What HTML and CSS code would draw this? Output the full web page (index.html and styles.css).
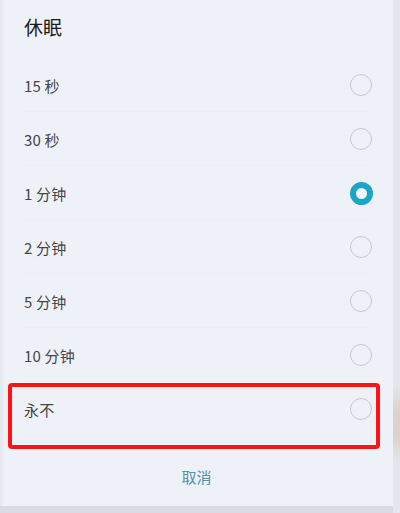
FILE: index.html
```html
<!DOCTYPE html>
<html lang="zh-CN">
<head>
<meta charset="utf-8">
<title>休眠</title>
<link rel="stylesheet" href="styles.css">
</head>
<body>
<div class="screen">
  <div class="dialog">
    <div class="title">休眠</div>
    <ul class="options">
      <li class="option"><span class="label">15 秒</span><span class="radio"></span></li>
      <li class="option"><span class="label">30 秒</span><span class="radio"></span></li>
      <li class="option"><span class="label">1 分钟</span><span class="radio checked"></span></li>
      <li class="option"><span class="label">2 分钟</span><span class="radio"></span></li>
      <li class="option"><span class="label">5 分钟</span><span class="radio"></span></li>
      <li class="option"><span class="label">10 分钟</span><span class="radio"></span></li>
      <li class="option last"><span class="label">永不</span><span class="radio"></span></li>
    </ul>
    <div class="actions"><span class="cancel">取消</span></div>
  </div>
  <div class="edge"></div>
  <div class="highlight"></div>
</div>
</body>
</html>
```

FILE: styles.css
```css
html, body {
  margin: 0;
  padding: 0;
}
body {
  width: 400px;
  height: 513px;
  overflow: hidden;
  background: #edf0f6;
  font-family: "Noto Sans CJK SC", "Noto Sans", Roboto, sans-serif;
}
.screen {
  position: relative;
  width: 400px;
  height: 513px;
  display: flex;
  background: linear-gradient(90deg, #e4e7ed 0, #eef1f7 4px, #eef1f7 100%);
}
.dialog {
  flex: 1;
  display: flex;
  flex-direction: column;
  height: 506px;
  border-bottom: 7px solid #d8dbe1;
}
.title {
  height: 58px;
  box-sizing: border-box;
  padding: 14px 0 0 24px;
  font-size: 19px;
  line-height: 26px;
  font-weight: 400;
  color: #1a1a1a;
}
.options {
  list-style: none;
  margin: 0;
  padding: 0;
}
.option {
  height: 54px;
  display: flex;
  align-items: center;
  justify-content: space-between;
  padding: 0 21px 0 24px;
  position: relative;
}
.option::after {
  content: "";
  position: absolute;
  left: 24px;
  right: 21px;
  bottom: 0;
  height: 1px;
  background: #ebeef4;
}
.option.last::after {
  display: none;
}
.label {
  font-size: 15px;
  color: #454545;
  letter-spacing: 0.2px;
}
.radio {
  width: 22px;
  height: 22px;
  border-radius: 50%;
  border: 1.4px solid #c7c9cd;
  box-sizing: border-box;
}
.radio.checked {
  width: 23px;
  height: 23px;
  margin-right: -0.5px;
  border: 6.5px solid #1aa6c9;
  background: #f3f6fa;
}
.actions {
  flex: 1;
  display: flex;
  justify-content: center;
  padding-top: 29px;
}
.cancel {
  font-size: 15px;
  line-height: 24px;
  height: 24px;
  color: #4f93b1;
}
.edge {
  width: 7px;
  height: 513px;
  background: linear-gradient(180deg, #e3e6ec 0, #e3e6ec 75%, #dcd3cd 80%, #dbd2cb 85%, #e3e6ec 90%, #e3e6ec 100%);
}
.highlight {
  position: absolute;
  left: 8px;
  top: 383px;
  width: 372px;
  height: 66px;
  box-sizing: border-box;
  border: 4px solid #ff1414;
  border-radius: 4px;
}
```
